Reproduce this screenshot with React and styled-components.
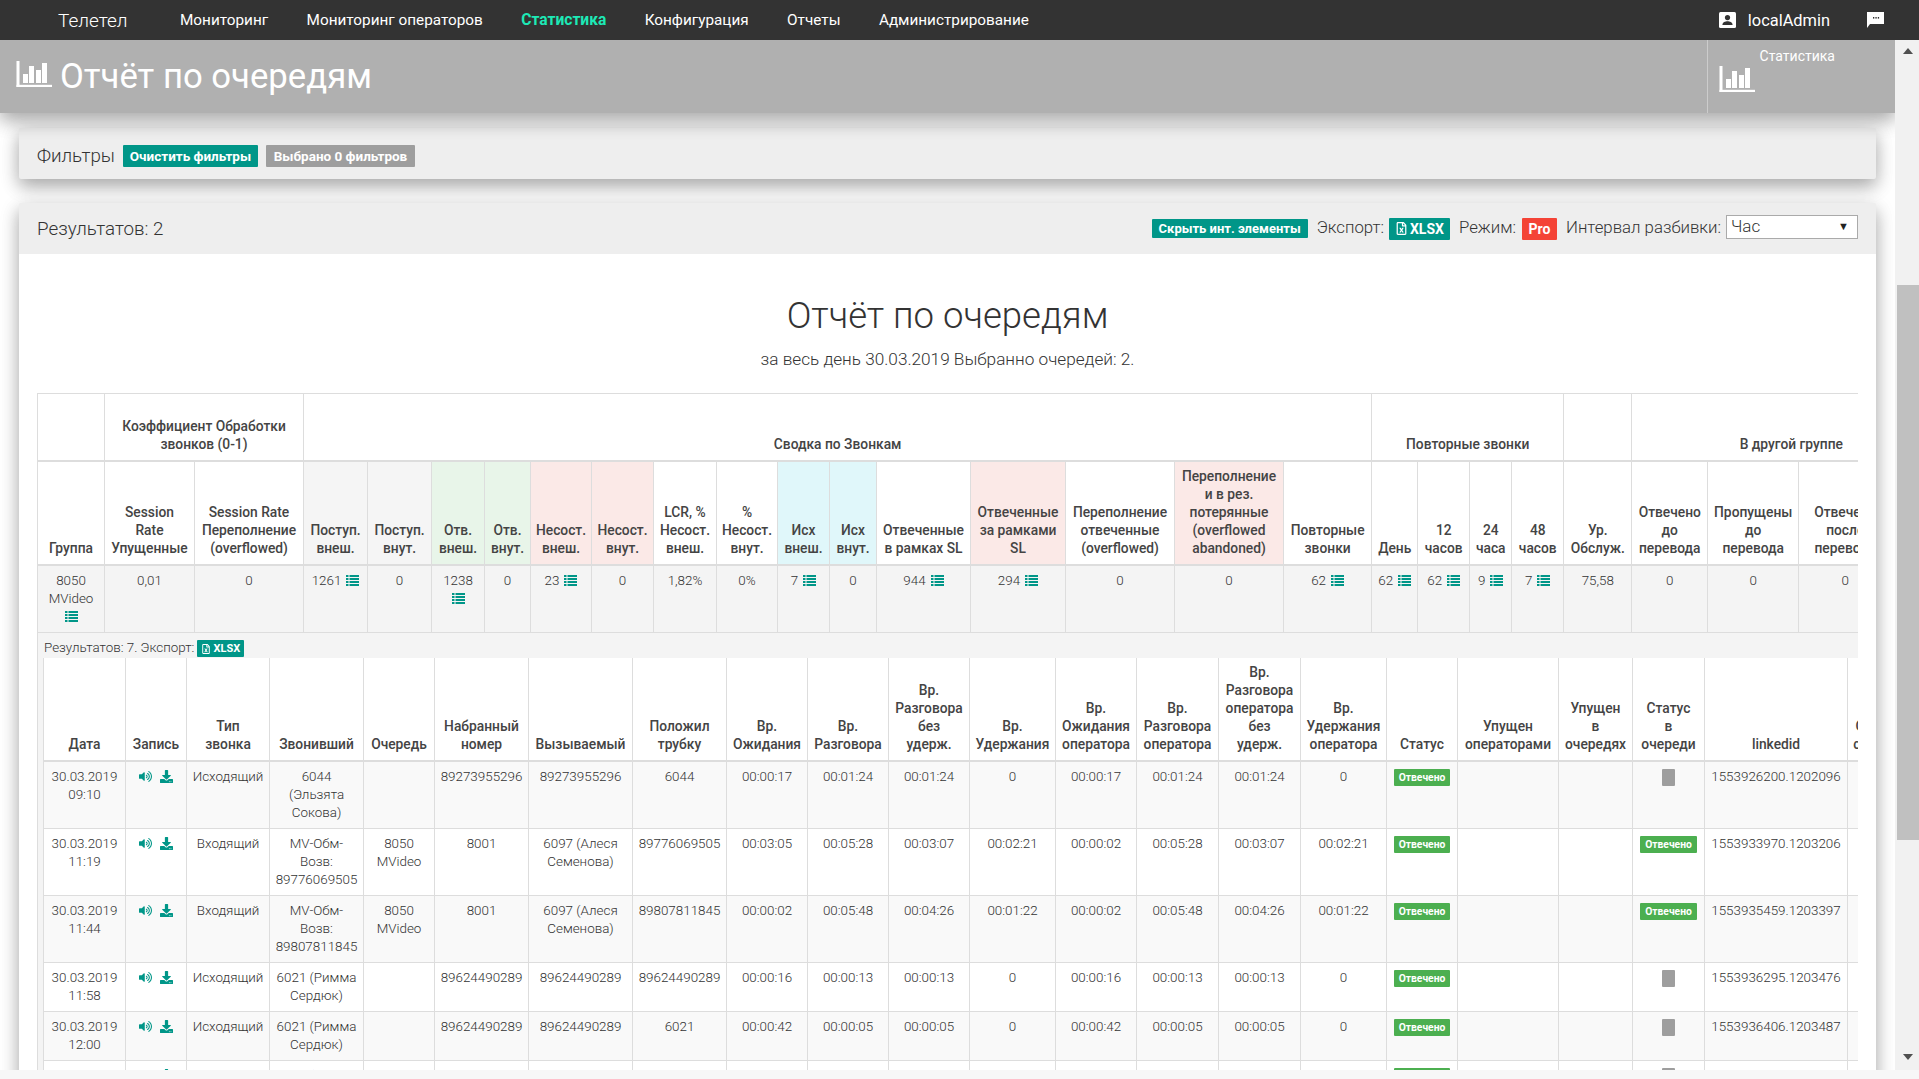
import React from 'react';
import styled, { createGlobalStyle } from 'styled-components';
import { FaVolumeUp, FaDownload, FaRegFileExcel } from 'react-icons/fa';

const Global = createGlobalStyle`
  html, body { margin: 0; padding: 0; background: #f7f7f7; overflow: hidden; }
  * { box-sizing: border-box; }
  body { font-family: Roboto, "Liberation Sans", sans-serif; color: #444; }
`;

const Page = styled.div`
  height: 1070px;
  display: flex;
  flex-direction: column;
  overflow: hidden;
`;
const Nav = styled.nav`
  height: 40px;
  flex: none;
  background: #333;
  display: flex;
  align-items: center;
  padding: 0 35px 0 58px;
  color: #fff;
  z-index: 3;
`;
const Brand = styled.span`
  font-size: 19px;
  font-weight: 300;
  width: 122px;
`;
const NavList = styled.div`
  display: flex;
  gap: 38.4px;
  flex: 1;
`;
const NavItem = styled.a`
  font-size: ${p => (p.$active ? 15.6 : 15.3)}px;
  font-weight: ${p => (p.$active ? 700 : 400)};
  color: ${p => (p.$active ? '#1de9b6' : '#fff')};
`;
const UserName = styled.span`
  font-size: 16.4px;
  margin: 0 37px 0 12px;
`;
const Body = styled.div`
  flex: 1;
  min-height: 0;
  display: flex;
`;
const Pane = styled.main`
  flex: 1;
  min-width: 0;
  overflow: hidden;
  background: #fff;
  display: flex;
  flex-direction: column;
`;
const Header = styled.header`
  flex: none;
  height: 73px;
  background: #b0b0b0;
  display: flex;
  justify-content: space-between;
  box-shadow: 0 8px 17px 0 rgba(0,0,0,.2), 0 6px 20px 0 rgba(0,0,0,.19);
  z-index: 2;
  color: #fff;
`;
const Title = styled.h1`
  margin: 0;
  padding: 18px 0 0 16px;
  display: flex;
  gap: 8px;
  font-size: 34.7px;
  line-height: 36px;
  font-weight: 400;
`;
const TitleIcon = styled.span`
  display: block;
  height: 26px;
  margin-top: 3px;
`;
const HeaderSide = styled.div`
  width: 188px;
  border-left: 1px solid #ccc;
  padding: 8px 0 0 11px;
  font-size: 14px;
  position: relative;
`;
const HeaderSideLabel = styled.div`
  text-align: right;
  padding-right: 60px;
  line-height: 16px;
  margin-bottom: 2px;
`;
const Card = styled.section`
  margin: ${p => p.$top}px 19px 0;
  background: #eee;
  border-radius: 2px;
  box-shadow: 0 8px 17px 0 rgba(0,0,0,.2), 0 6px 20px 0 rgba(0,0,0,.19);
  flex: none;
`;
const CardBar = styled.div`
  height: 51px;
  padding: ${p => p.$pt || 0}px 18px 0;
  display: flex;
  align-items: center;
  font-size: 18.8px;
  font-weight: 300;
  color: #333;
`;
const Chip = styled.span`
  display: inline-flex;
  align-items: center;
  justify-content: center;
  gap: 2px;
  flex: none;
  height: ${p => p.$h || 22}px;
  width: ${p => p.$w}px;
  margin-left: ${p => p.$ml || 0}px;
  background: ${p => p.$bg};
  color: #fff;
  font-size: ${p => p.$fs || 13.5}px;
  font-weight: 700;
  border-radius: 1px;
`;
const Spacer = styled.div`
  flex: 1;
`;
const BarLabel = styled.span`
  font-size: 16.8px;
  margin: 0 0 4px ${p => p.$ml}px;
`;
const SelectWrap = styled.div`
  position: relative;
  margin: 0 0 3px 5px;
  width: 132px;
  height: 24px;
`;
const Select = styled.select`
  appearance: none;
  width: 100%;
  height: 100%;
  background: #fff;
  border: 1px solid #aaa;
  border-radius: 0;
  padding: 0 4px 2px;
  font: 300 17px Roboto, sans-serif;
  color: #333;
  outline: none;
`;
const SelectArrow = styled.span`
  position: absolute;
  right: 9px;
  top: 5px;
  font-size: 11px;
  color: #222;
  pointer-events: none;
`;
const CardBody = styled.div`
  background: #fff;
  padding: 40px 18px 0;
`;
const ReportTitle = styled.h2`
  margin: 0;
  text-align: center;
  font-size: 36.5px;
  line-height: 44px;
  font-weight: 300;
  color: #333;
`;
const ReportSub = styled.p`
  margin: 9px 0 22px;
  text-align: center;
  font-size: 17.2px;
  line-height: 24px;
  font-weight: 300;
  color: #333;
`;
const TableClip = styled.div`
  overflow: hidden;
  border-top: 1px solid #ddd;
  margin-bottom: 40px;
`;
const Table = styled.table`
  table-layout: fixed;
  border-collapse: collapse;
  font-size: 13.4px;
  line-height: 18px;
  width: ${p => p.$w}px;
`;
const Th = styled.th`
  border: 1px solid #ddd;
  border-top: 0;
  border-bottom: 2px solid #ddd;
  padding: 5px 2px 7px;
  vertical-align: bottom;
  text-align: center;
  font-size: 13.8px;
  font-weight: 500;
  color: #444;
  white-space: pre;
  background: ${p => p.$bg || 'transparent'};
  height: ${p => p.$h || 'auto'};
`;
const Td = styled.td`
  border: 1px solid #ddd;
  padding: 6px 2px 6px;
  vertical-align: top;
  text-align: center;
  font-weight: 300;
  color: #333;
  white-space: pre;
`;
const SummaryRow = styled.tr`
  background: #f4f4f4;
`;
const DetailRowOuter = styled.tr`
  background: #f4f4f4;
`;
const DetailCell = styled.td`
  padding: 0 0 0 5px;
  border: 1px solid #ddd;
  border-bottom: 0;
`;
const DetailBar = styled.div`
  height: 25px;
  padding: 0 0 1px 1px;
  display: flex;
  align-items: flex-end;
  font-weight: 300;
  color: #333;
  gap: 3px;
`;
const DataRow = styled.tr`
  background: ${p => (p.$odd ? '#f9f9f9' : '#fff')};
`;
const InnerHead = styled.tr`
  background: #fff;
`;
const ListBtn = styled.svg`
  width: 13px;
  height: 11px;
  margin-left: ${p => (p.$block ? 0 : 5)}px;
  vertical-align: -1px;
  display: ${p => (p.$block ? 'block' : 'inline-block')};
  margin-inline: ${p => (p.$block ? 'auto' : undefined)};
  margin-top: ${p => (p.$block ? 3 : 0)}px;
  margin-bottom: ${p => (p.$block ? 4 : 0)}px;
  fill: #009688;
`;
const Actions = styled.div`
  display: flex;
  justify-content: center;
  gap: 8px;
  color: #009688;
  font-size: 13px;
  padding-top: 2px;
`;
const Badge = styled.span`
  display: inline-block;
  height: 17px;
  min-width: 13px;
  margin-top: 1px;
  padding: 0 5px;
  background: ${p => (p.$empty ? '#9e9e9e' : '#4caf50')};
  color: #fff;
  font-size: 10.3px;
  line-height: 17px;
  font-weight: 700;
  border-radius: 1px;
  vertical-align: top;
`;
const Scroll = styled.aside`
  width: 24px;
  flex: none;
  background: #f1f1f1;
  position: relative;
  padding-left: 2px;
  z-index: 2;
`;
const Thumb = styled.div`
  margin-top: 245px;
  height: 555px;
  background: #c0c0c0;
`;
const Arrow = styled.span`
  position: absolute;
  left: 8px;
  width: 0;
  height: 0;
  border-left: 5px solid transparent;
  border-right: 5px solid transparent;
  ${p => (p.$up ? 'top: 8px; border-bottom: 6px solid #505050;' : 'bottom: 10px; border-top: 6px solid #505050;')}
`;

const ChartIcon = ({ w = 36, h = 26 }) => (
  <svg width={w} height={h} viewBox="0 0 36 26" fill="#fff" style={{ flex: 'none', display: 'block' }}>
    <rect x="0.5" y="0" width="3" height="26" />
    <rect x="0.5" y="23.8" width="35.5" height="2.2" />
    <rect x="7" y="13" width="5" height="9" />
    <rect x="13" y="5" width="5" height="17" />
    <rect x="20" y="9" width="5" height="13" />
    <rect x="26" y="2" width="5" height="20" />
  </svg>
);
const UserIcon = () => (
  <svg width="17" height="16" viewBox="0 0 17 16">
    <rect width="17" height="16" rx="1.5" fill="#fff" />
    <circle cx="8.5" cy="5.6" r="2.6" fill="#333" />
    <path d="M3.4 13c0-2.8 3-3.8 5.1-3.8s5.1 1 5.1 3.8z" fill="#333" />
  </svg>
);
const ChatIcon = () => (
  <svg width="17" height="16" viewBox="0 0 17 16">
    <path d="M0 0h17v12H3l-3 4z" fill="#fff" />
    <rect x="6" y="5" width="1.3" height="1.6" fill="#333" />
    <rect x="8.4" y="5" width="1.3" height="1.6" fill="#333" />
    <rect x="10.8" y="5" width="1.3" height="1.6" fill="#333" />
  </svg>
);
const ListIcon = ({ block }) => (
  <ListBtn $block={block} viewBox="0 0 13 11">
    {[0, 3, 6, 9].map(y => (
      <g key={y}>
        <rect x="0" y={y} width="2.5" height="2" />
        <rect x="3.5" y={y} width="9.5" height="2" />
      </g>
    ))}
  </ListBtn>
);

const OUTER = [67,90,109,64,64,53,46,61,62,63,61,52,47,94,95,109,109,88,46,52,42,52,68,76,91,93,59];
const INNER = [82,61,83,94,71,94,104,94,81,81,81,86,81,82,82,86,71,101,74,72,143,64];
const sum = a => a.reduce((x, y) => x + y, 0);

const GREY = '#f5f5f5', GREEN = '#e8f5e9', RED = '#fbe9e7', CYAN = '#e0f7fa';
const TOP = [
  { t: '', s: 1 },
  { t: 'Коэффициент Обработки\nзвонков (0-1)', s: 2 },
  { t: 'Сводка по Звонкам', s: 15 },
  { t: 'Повторные звонки', s: 4 },
  { t: '', s: 1 },
  { t: 'В другой группе', s: 4 },
];
const SECOND = [
  ['Группа'], ['Session\nRate\nУпущенные'], ['Session Rate\nПереполнение\n(overflowed)'],
  ['Поступ.\nвнеш.', GREY], ['Поступ.\nвнут.', GREY], ['Отв.\nвнеш.', GREEN], ['Отв.\nвнут.', GREEN],
  ['Несост.\nвнеш.', RED], ['Несост.\nвнут.', RED], ['LCR, %\nНесост.\nвнеш.'], ['%\nНесост.\nвнут.'],
  ['Исх\nвнеш.', CYAN], ['Исх\nвнут.', CYAN], ['Отвеченные\nв рамках SL'], ['Отвеченные\nза рамками\nSL', RED],
  ['Переполнение\nотвеченные\n(overflowed)'], ['Переполнение\nи в рез.\nпотерянные\n(overflowed\nabandoned)', RED],
  ['Повторные\nзвонки'], ['День'], ['12\nчасов'], ['24\nчаса'], ['48\nчасов'], ['Ур.\nОбслуж.'],
  ['Отвечено\nдо\nперевода'], ['Пропущены\nдо\nперевода'], ['Отвечено\nпосле\nперевода'], [''],
];
const SUMMARY = [
  ['8050\nMVideo', 'block'], ['0,01'], ['0'], ['1261', 'inline'], ['0'], ['1238', 'block'], ['0'], ['23', 'inline'], ['0'],
  ['1,82%'], ['0%'], ['7', 'inline'], ['0'], ['944', 'inline'], ['294', 'inline'], ['0'], ['0'], ['62', 'inline'],
  ['62', 'inline'], ['62', 'inline'], ['9', 'inline'], ['7', 'inline'], ['75,58'], ['0'], ['0'], ['0'], [''],
];
const INNER_HEAD = [
  'Дата', 'Запись', 'Тип\nзвонка', 'Звонивший', 'Очередь', 'Набранный\nномер', 'Вызываемый', 'Положил\nтрубку',
  'Вр.\nОжидания', 'Вр.\nРазговора', 'Вр.\nРазговора\nбез\nудерж.', 'Вр.\nУдержания', 'Вр.\nОжидания\nоператора',
  'Вр.\nРазговора\nоператора', 'Вр.\nРазговора\nоператора\nбез\nудерж.', 'Вр.\nУдержания\nоператора', 'Статус',
  'Упущен\nоператорами', 'Упущен\nв\nочередях', 'Статус\nв\nочереди', 'linkedid', 'Оценка\nсервиса',
];
const ROWS = [
  ['30.03.2019\n09:10', 'Исходящий', '6044\n(Эльзята\nСокова)', '', '89273955296', '89273955296', '6044', '00:00:17', '00:01:24', '00:01:24', '0', '00:00:17', '00:01:24', '00:01:24', '0', false, '1553926200.1202096'],
  ['30.03.2019\n11:19', 'Входящий', 'MV-Обм-\nВозв:\n89776069505', '8050\nMVideo', '8001', '6097 (Алеся\nСеменова)', '89776069505', '00:03:05', '00:05:28', '00:03:07', '00:02:21', '00:00:02', '00:05:28', '00:03:07', '00:02:21', true, '1553933970.1203206'],
  ['30.03.2019\n11:44', 'Входящий', 'MV-Обм-\nВозв:\n89807811845', '8050\nMVideo', '8001', '6097 (Алеся\nСеменова)', '89807811845', '00:00:02', '00:05:48', '00:04:26', '00:01:22', '00:00:02', '00:05:48', '00:04:26', '00:01:22', true, '1553935459.1203397'],
  ['30.03.2019\n11:58', 'Исходящий', '6021 (Римма\nСердюк)', '', '89624490289', '89624490289', '89624490289', '00:00:16', '00:00:13', '00:00:13', '0', '00:00:16', '00:00:13', '00:00:13', '0', false, '1553936295.1203476'],
  ['30.03.2019\n12:00', 'Исходящий', '6021 (Римма\nСердюк)', '', '89624490289', '89624490289', '6021', '00:00:42', '00:00:05', '00:00:05', '0', '00:00:42', '00:00:05', '00:00:05', '0', false, '1553936406.1203487'],
  ['30.03.2019\n12:04', 'Исходящий', '6021 (Римма\nСердюк)', '', '89624490289', '89624490289', '6021', '00:00:20', '00:00:09', '00:00:09', '0', '00:00:20', '00:00:09', '00:00:09', '0', false, '1553936640.1203512'],
];

const Cols = ({ list }) => (
  <colgroup>
    {list.map((w, i) => <col key={i} width={w} />)}
  </colgroup>
);

const DetailTable = () => (
  <Table $w={sum(INNER)}>
    <Cols list={INNER} />
    <thead>
      <InnerHead>
        {INNER_HEAD.map((t, i) => <Th key={i}>{t}</Th>)}
      </InnerHead>
    </thead>
    <tbody>
      {ROWS.map((r, i) => (
        <DataRow key={i} $odd={i % 2 === 0}>
          <Td>{r[0]}</Td>
          <Td><Actions><FaVolumeUp /><FaDownload /></Actions></Td>
          {r.slice(1, 15).map((c, j) => <Td key={j}>{c}</Td>)}
          <Td><Badge>Отвечено</Badge></Td>
          <Td />
          <Td />
          <Td>{r[15] ? <Badge>Отвечено</Badge> : <Badge $empty />}</Td>
          <Td>{r[16]}</Td>
          <Td />
        </DataRow>
      ))}
    </tbody>
  </Table>
);

export default function App() {
  return (
    <Page>
      <Global />
      <Nav>
        <Brand>Телетел</Brand>
        <NavList>
          <NavItem>Мониторинг</NavItem>
          <NavItem>Мониторинг операторов</NavItem>
          <NavItem $active>Статистика</NavItem>
          <NavItem>Конфигурация</NavItem>
          <NavItem>Отчеты</NavItem>
          <NavItem>Администрирование</NavItem>
        </NavList>
        <UserIcon />
        <UserName>localAdmin</UserName>
        <ChatIcon />
      </Nav>
      <Body>
        <Pane>
          <Header>
            <Title><TitleIcon><ChartIcon /></TitleIcon>Отчёт по очередям</Title>
            <HeaderSide>
              <HeaderSideLabel>Статистика</HeaderSideLabel>
              <ChartIcon w={36} h={26} />
            </HeaderSide>
          </Header>
          <Card $top={15}>
            <CardBar $pt={4}>
              Фильтры
              <Chip $bg="#009688" $w={135} $ml={8}>Очистить фильтры</Chip>
              <Chip $bg="#9e9e9e" $w={149} $ml={8}>Выбрано 0 фильтров</Chip>
            </CardBar>
          </Card>
          <Card $top={24}>
            <CardBar>
              Результатов: 2
              <Spacer />
              <Chip $bg="#009688" $w={156} $h={19} $fs={13}>Скрыть инт. элементы</Chip>
              <BarLabel $ml={9}>Экспорт:</BarLabel>
              <Chip $bg="#009688" $w={61} $ml={5} $fs={14}><FaRegFileExcel size={13} />XLSX</Chip>
              <BarLabel $ml={9}>Режим:</BarLabel>
              <Chip $bg="#f44336" $w={35} $ml={6} $fs={14}>Pro</Chip>
              <BarLabel $ml={9}>Интервал разбивки:</BarLabel>
              <SelectWrap>
                <Select defaultValue="hour"><option value="hour">Час</option></Select>
                <SelectArrow>▼</SelectArrow>
              </SelectWrap>
            </CardBar>
            <CardBody>
              <ReportTitle>Отчёт по очередям</ReportTitle>
              <ReportSub>за весь день 30.03.2019 Выбранно очередей: 2.</ReportSub>
              <TableClip>
                <Table $w={sum(OUTER)}>
                  <Cols list={OUTER} />
                  <thead>
                    <tr>
                      {TOP.map((c, i) => <Th key={i} colSpan={c.s} $h="67px">{c.t}</Th>)}
                    </tr>
                    <tr>
                      {SECOND.map(([t, bg], i) => <Th key={i} $bg={bg}>{t}</Th>)}
                    </tr>
                  </thead>
                  <tbody>
                    <SummaryRow>
                      {SUMMARY.map(([t, ic], i) => (
                        <Td key={i}>
                          {t}
                          {ic && <ListIcon block={ic === 'block'} />}
                        </Td>
                      ))}
                    </SummaryRow>
                    <DetailRowOuter>
                      <DetailCell colSpan={OUTER.length}>
                        <DetailBar>
                          Результатов: 7. Экспорт:
                          <Chip $bg="#009688" $w={47} $h={17} $fs={11}><FaRegFileExcel size={10} />XLSX</Chip>
                        </DetailBar>
                        <DetailTable />
                      </DetailCell>
                    </DetailRowOuter>
                  </tbody>
                </Table>
              </TableClip>
            </CardBody>
          </Card>
        </Pane>
        <Scroll>
          <Arrow $up />
          <Thumb />
          <Arrow />
        </Scroll>
      </Body>
    </Page>
  );
}
